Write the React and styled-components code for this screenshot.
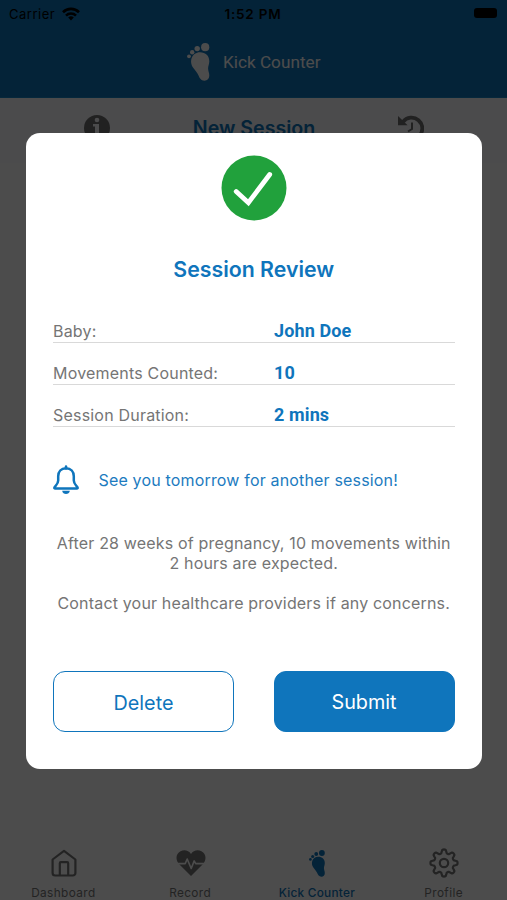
import React from "react";
import styled, { createGlobalStyle } from "styled-components";

const blue = "#0f75bc";

const GlobalStyle = createGlobalStyle`
  * { box-sizing: border-box; }
  body { margin: 0; background: #fff; font-family: Inter, sans-serif; overflow: hidden; }
  svg { display: block; flex: none; }
`;

const Screen = styled.div`
  width: 507px;
  height: 900px;
  display: flex;
  flex-direction: column;
  overflow: hidden;
`;

const Header = styled.header`
  height: 98px;
  background: ${blue};
  border-bottom: 1px solid #1788c8;
`;

const StatusBar = styled.div`
  height: 28px;
  padding: 0 10px 0 9px;
  display: grid;
  grid-template-columns: 1fr auto 1fr;
  align-items: center;
  font-size: 13px;
  color: #000;
`;

const Carrier = styled.div`
  display: flex;
  align-items: center;
  gap: 7px;
  letter-spacing: 0.5px;
`;

const Clock = styled.div`
  font-weight: 600;
  font-size: 13.5px;
  letter-spacing: 0.8px;
`;

const Battery = styled.div`
  justify-self: end;
  width: 23px;
  height: 10px;
  border-radius: 3px;
  background: #000;
  margin-top: -2px;
`;

const TitleBar = styled.div`
  height: 67px;
  padding-left: 187px;
  display: flex;
  align-items: center;
  gap: 12px;
  font: 17.2px/20px Roboto, sans-serif;
  color: #fff;
`;

const SubBar = styled.div`
  height: 65px;
  padding: 0 83px 5px 84px;
  display: flex;
  align-items: center;
  justify-content: space-between;
  background: #fafafe;
  color: #6f6f6f;
`;

const SubTitle = styled.h1`
  margin: 0;
  font-size: 19.6px;
  font-weight: 600;
  color: ${blue};
`;

const Body = styled.main`
  flex: 1;
`;

const TabBar = styled.nav`
  height: 62px;
  display: grid;
  grid-template-columns: repeat(4, 1fr);
`;

const Tab = styled.div`
  display: flex;
  flex-direction: column;
  align-items: center;
  color: ${(p) => (p.$active ? blue : "#777")};
  font-size: 11.8px;
  line-height: 16px;
  font-weight: ${(p) => (p.$active ? 500 : 400)};
  letter-spacing: ${(p) => (p.$active ? "0.25px" : "0.4px")};
  white-space: nowrap;
`;

const TabIcon = styled.div`
  height: 47px;
  padding: 3px 0 0 1px;
  display: flex;
  align-items: center;
`;

const Overlay = styled.div`
  position: fixed;
  inset: 0;
  background: rgba(0, 0, 0, 0.7);
  display: flex;
  align-items: flex-start;
  padding: 132.5px 0 0 26px;
`;

const Dialog = styled.section`
  width: 455.5px;
  height: 636px;
  padding: 22px 27px 0;
  border-radius: 14px;
  background: #fff;
  display: flex;
  flex-direction: column;
`;

const Success = styled.div`
  align-self: center;
  height: 66px;
`;

const Heading = styled.h2`
  margin: 35px 0 19px;
  font-size: 21.3px;
  line-height: 26px;
  font-weight: 600;
  text-align: center;
  color: ${blue};
`;

const Row = styled.div`
  height: 42px;
  padding-bottom: 1px;
  border-bottom: 1px solid #d9d9d9;
  display: grid;
  grid-template-columns: 221px 1fr;
  align-items: end;
  line-height: 20px;
`;

const Label = styled.span`
  font-size: 16px;
  letter-spacing: 0.2px;
  color: #757575;
`;

const Value = styled.span`
  font-family: Roboto, sans-serif;
  font-size: 18px;
  font-weight: 700;
  letter-spacing: 0.12px;
  color: ${blue};
`;

const Reminder = styled.div`
  margin-top: 37px;
  height: 32px;
  display: flex;
  align-items: center;
  gap: 19.5px;
  font-size: 16px;
  letter-spacing: 0.17px;
  color: #1c7bc0;
  white-space: nowrap;
`;

const Note = styled.p`
  margin: ${(p) => (p.$first ? "37px" : "20px")} -10px 0;
  font-size: 16px;
  line-height: 20px;
  letter-spacing: 0.17px;
  text-align: center;
  color: #757575;
`;

const Actions = styled.div`
  margin-top: 58px;
  display: grid;
  grid-template-columns: 1fr 1fr;
  gap: 39.5px;
`;

const Button = styled.button`
  height: 61px;
  border: 1.5px solid ${blue};
  border-radius: 12px;
  background: ${(p) => (p.$primary ? blue : "#fff")};
  color: ${(p) => (p.$primary ? "#fff" : blue)};
  font: 400 19.8px/24px Inter, sans-serif;
  padding: ${(p) => (p.$primary ? "1px 0 0" : "3px 0 0")};
`;

const Wifi = () => (
  <svg width="18" height="14" viewBox="0 0 18 14" fill="none" stroke="#000" strokeWidth="2.6">
    <path d="M1 5.2a11.4 11.4 0 0 1 16 0" />
    <path d="M4 8.6a7.1 7.1 0 0 1 10 0" />
    <path d="M9 13.5 6.2 10.6a4 4 0 0 1 5.6 0Z" fill="#000" stroke="none" />
  </svg>
);

const Foot = ({ width, height }) => (
  <svg width={width} height={height} viewBox="0 0 24 38" fill="currentColor">
    <circle cx="18.2" cy="4.2" r="4.1" />
    <circle cx="10.2" cy="5.6" r="2.7" />
    <circle cx="5.200" cy="9.200" r="2.200" />
    <circle cx="2" cy="13.300" r="1.900" />
    <path d="M13 9.300C18.500 9.300 22.500 13 22.300 18.500c-.1 3-1.300 4.500-1.200 7.300.1 2.500 1.300 4.300 1.200 7-.1 3-2 5-5 4.900-3.200-.1-4.600-2.400-5.900-5.500-1.300-3-3.200-4.700-5-7.200C1.500 18.500 5 9.300 13 9.300Z" />
  </svg>
);

const Info = () => (
  <svg width="26" height="26" viewBox="0 0 26 26">
    <circle cx="13" cy="13" r="13" fill="currentColor" />
    <circle cx="13" cy="5" r="2.300" fill="#fafafe" />
    <path d="M9 9h6v10h2v2.500H9V19h2v-7.500H9Z" fill="#fafafe" />
  </svg>
);

const History = () => (
  <svg width="26" height="26" viewBox="0 0 26 26" fill="none" stroke="currentColor">
    <path d="M5 6.800A10.800 10.800 0 1 1 6 21.200" strokeWidth="3.800" />
    <path d="M0 1V10.300h9.600Z" fill="currentColor" stroke="none" />
    <path d="M14 7.500V14l-4 2.500" strokeWidth="2" />
  </svg>
);

const Home = () => (
  <svg width="26" height="28" viewBox="0 0 26 28" fill="none" stroke="currentColor" strokeWidth="2.200" strokeLinejoin="round">
    <path d="M1.600 10.500 13 1.800l11.400 8.700V24a2.500 2.500 0 0 1-2.500 2.500H4.100A2.500 2.500 0 0 1 1.600 24Z" />
    <path d="M8.800 26V14.200q0-1 1-1h6.400q1 0 1 1V26" />
  </svg>
);

const Heart = () => (
  <svg width="30" height="28" viewBox="0 0 30 28">
    <path d="M15 27 3 15C-1 10.500 0 4.500 4.500 2.200 8.500.3 12.700 1.500 15 5c2.300-3.500 6.500-4.700 10.500-2.800C30 4.500 31 10.500 27 15Z" fill="currentColor" />
    <path d="M0 14.600h9.200l2-4.600 4 9.500 3-7.600 1.500 2.700H30" fill="none" stroke="#fff" strokeWidth="1.600" strokeLinejoin="round" />
  </svg>
);

const gearPoints = Array.from({ length: 97 }, (_, i) => {
  const a = (i / 96) * Math.PI * 2;
  const r = 11.7 + 1.900 * Math.tanh(2 * Math.cos(8 * a));
  return `${(15 + r * Math.sin(a)).toFixed(2)},${(15 - r * Math.cos(a)).toFixed(2)}`;
}).join(" ");

const Gear = () => (
  <svg width="30" height="30" viewBox="0 0 30 30" fill="none" stroke="currentColor" strokeWidth="2.200" strokeLinejoin="round">
    <polygon points={gearPoints} />
    <circle cx="15" cy="15" r="4.200" />
  </svg>
);

const Check = () => (
  <svg width="66" height="66" viewBox="0 0 66 66">
    <circle cx="33" cy="33" r="32.500" fill="#21a13c" />
    <path d="m15.200 36.500 12.200 11.200 21.300-28.200" fill="none" stroke="#fff" strokeWidth="4.800" strokeLinecap="round" strokeLinejoin="miter" />
  </svg>
);

const Bell = () => (
  <svg width="26" height="30" viewBox="0 0 26 30" fill="none" stroke={blue} strokeWidth="2.500" strokeLinejoin="round" strokeLinecap="round">
    <path d="M13 3.300c-5 0-7.800 3.500-7.800 8v4.200c0 3-2 4.500-3.600 6.700-.5.800-.2 1.300.6 1.300h21.600c.8 0 1.100-.5.600-1.300-1.600-2.200-3.600-3.700-3.600-6.700v-4.200c0-4.500-2.800-8-7.800-8Z" />
    <path d="M13 1.500v2" />
    <path d="M9.200 25.800h7.600c-.5 4.300-7.100 4.300-7.600 0Z" fill={blue} stroke="none" />
  </svg>
);

const details = [
  ["Baby:", "John Doe"],
  ["Movements Counted:", "10"],
  ["Session Duration:", "2 mins"],
];

export default function App() {
  return (
    <>
      <GlobalStyle />
      <Screen>
        <Header>
          <StatusBar>
            <Carrier>Carrier <Wifi /></Carrier>
            <Clock>1:52 PM</Clock>
            <Battery />
          </StatusBar>
          <TitleBar>
            <Foot width={24} height={38} />
            Kick Counter
          </TitleBar>
        </Header>
        <SubBar>
          <Info />
          <SubTitle>New Session</SubTitle>
          <History />
        </SubBar>
        <Body />
        <TabBar>
          <Tab><TabIcon><Home /></TabIcon>Dashboard</Tab>
          <Tab><TabIcon><Heart /></TabIcon>Record</Tab>
          <Tab $active><TabIcon><Foot width={17} height={27} /></TabIcon>Kick Counter</Tab>
          <Tab><TabIcon><Gear /></TabIcon>Profile</Tab>
        </TabBar>
      </Screen>
      <Overlay>
        <Dialog role="dialog" aria-label="Session Review">
          <Success><Check /></Success>
          <Heading>Session Review</Heading>
          {details.map(([label, value]) => (
            <Row key={label}>
              <Label>{label}</Label>
              <Value>{value}</Value>
            </Row>
          ))}
          <Reminder><Bell />See you tomorrow for another session!</Reminder>
          <Note $first>After 28 weeks of pregnancy, 10 movements within<br />2 hours are expected.</Note>
          <Note>Contact your healthcare providers if any concerns.</Note>
          <Actions>
            <Button>Delete</Button>
            <Button $primary>Submit</Button>
          </Actions>
        </Dialog>
      </Overlay>
    </>
  );
}
